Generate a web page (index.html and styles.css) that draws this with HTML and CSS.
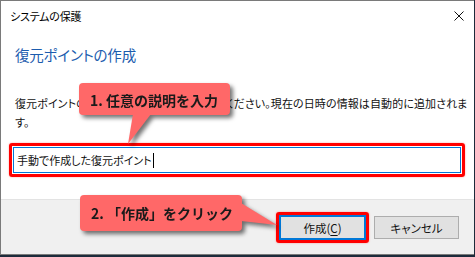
FILE: index.html
```html
<!DOCTYPE html>
<html lang="ja">
<head>
<meta charset="utf-8">
<link rel="stylesheet" href="styles.css">
</head>
<body>
<div class="window">
  <div class="titlebar">
    <span class="title">システムの保護</span>
    <svg class="close" width="10" height="10" viewBox="0 0 10 10"><path d="M0.5 0.5 L9.5 9.5 M9.5 0.5 L0.5 9.5" stroke="#111" stroke-width="1"/></svg>
  </div>
  <div class="main">
    <h1 class="heading">復元ポイントの作成</h1>
    <p class="desc">復元ポイントの識別に役立つ説明を入力してください。現在の日時の情報は自動的に追加されます。</p>
    <div class="mark-input">
      <div class="input"><span class="value">手動で作成した復元ポイント</span><span class="caret"></span></div>
    </div>
  </div>
  <div class="footer">
    <div class="mark-button">
      <button class="btn btn-default">作成(<u>C</u>)</button>
    </div>
    <button class="btn">キャンセル</button>
  </div>
</div>

<div class="callout callout-1">
  <div class="callout-box">1. 任意の説明を入力</div>
  <svg class="pointer pointer-1" width="30" height="32" viewBox="0 0 30 32"><polygon points="6,0 24,0 1,30" fill="#ff6868"/></svg>
</div>

<div class="callout callout-2">
  <div class="callout-box">2. 「作成」をクリック</div>
  <svg class="pointer pointer-2" width="40" height="30" viewBox="0 0 40 30"><polygon points="0,6 0,24 36,28" fill="#ff6868"/></svg>
</div>
</body>
</html>
```

FILE: styles.css
```css
* { box-sizing: border-box; }
html, body {
  margin: 0;
  padding: 0;
}
body {
  width: 475px;
  height: 257px;
  overflow: hidden;
  background: #1d2b3b;
  font-family: "Noto Sans CJK JP", "Noto Sans", sans-serif;
  font-feature-settings: "palt";
  color: #000;
  position: relative;
}
.window {
  width: 474px;
  height: 255px;
  background: #fff;
  border: 1px solid #7a7a7a;
  border-right: none;
  display: flex;
  flex-direction: column;
}
.titlebar {
  height: 30px;
  display: flex;
  align-items: center;
  justify-content: space-between;
  padding: 0 10px 0 9px;
}
.title {
  font-size: 11px;
  letter-spacing: -0.2px;
  line-height: 16px;
}
.close { display: block; }
.main {
  flex: 1;
  padding: 0 6px 0 13px;
}
.heading {
  margin: 14px 0 0 1px;
  font-size: 14.5px;
  letter-spacing: -0.2px;
  line-height: 20px;
  font-weight: normal;
  color: #1c5cae;
}
.desc {
  margin: 29px 0 0 1px;
  width: 454px;
  font-size: 11px;
  letter-spacing: 0.1px;
  line-height: 19px;
  color: #111;
}
.mark-input {
  margin: 11px 0 0 -5px;
  width: 456px;
  border: 3px solid #ff0000;
  border-radius: 3px;
  padding: 1px;
  box-shadow: 0 0 2px rgba(255, 0, 0, 0.4);
}
.input {
  height: 26px;
  border: 1px solid #0078d7;
  display: flex;
  align-items: center;
  padding-left: 3px;
  font-size: 11px;
  letter-spacing: 0;
  color: #111;
}
.caret {
  display: inline-block;
  width: 1px;
  height: 15px;
  margin-left: 1px;
  background: #000;
}
.footer {
  height: 55px;
  background: #f0f0f0;
  border-top: 1px solid #e3e3e3;
  display: flex;
  align-items: center;
  justify-content: flex-end;
  gap: 5px;
  padding: 1px 15px 0 0;
}
.mark-button {
  border: 3px solid #ff0000;
  border-radius: 3px;
  box-shadow: 0 0 2px rgba(255, 0, 0, 0.4);
}
.btn {
  display: block;
  margin: 0;
  width: 85px;
  height: 23px;
  padding: 0;
  background: #e1e1e1;
  border: 1px solid #adadad;
  font-family: inherit;
  font-feature-settings: "palt";
  font-size: 11.5px;
  color: #111;
}
.btn-default {
  width: 87px;
  height: 25px;
  border: 2px solid #0078d7;
}
.btn u { text-underline-offset: 2px; }

.callout {
  position: absolute;
  filter: drop-shadow(3px 3px 2px rgba(0, 0, 0, 0.55));
}
.callout-box {
  position: relative;
  background: #ff6868;
  border-radius: 4px;
  font-size: 14px;
  font-weight: bold;
  font-feature-settings: normal;
  color: #1a1a1a;
  padding-left: 11px;
  white-space: nowrap;
}
.pointer {
  position: absolute;
  display: block;
}
.callout-1 {
  left: 79px;
  top: 83px;
}
.callout-1 .callout-box {
  width: 151px;
  height: 32px;
  line-height: 34px;
}
.pointer-1 {
  left: 48px;
  top: 31px;
}
.callout-2 {
  left: 80px;
  top: 195px;
}
.callout-2 .callout-box {
  width: 162px;
  height: 36px;
  line-height: 36px;
}
.pointer-2 {
  left: 161px;
  top: 2px;
}
```
